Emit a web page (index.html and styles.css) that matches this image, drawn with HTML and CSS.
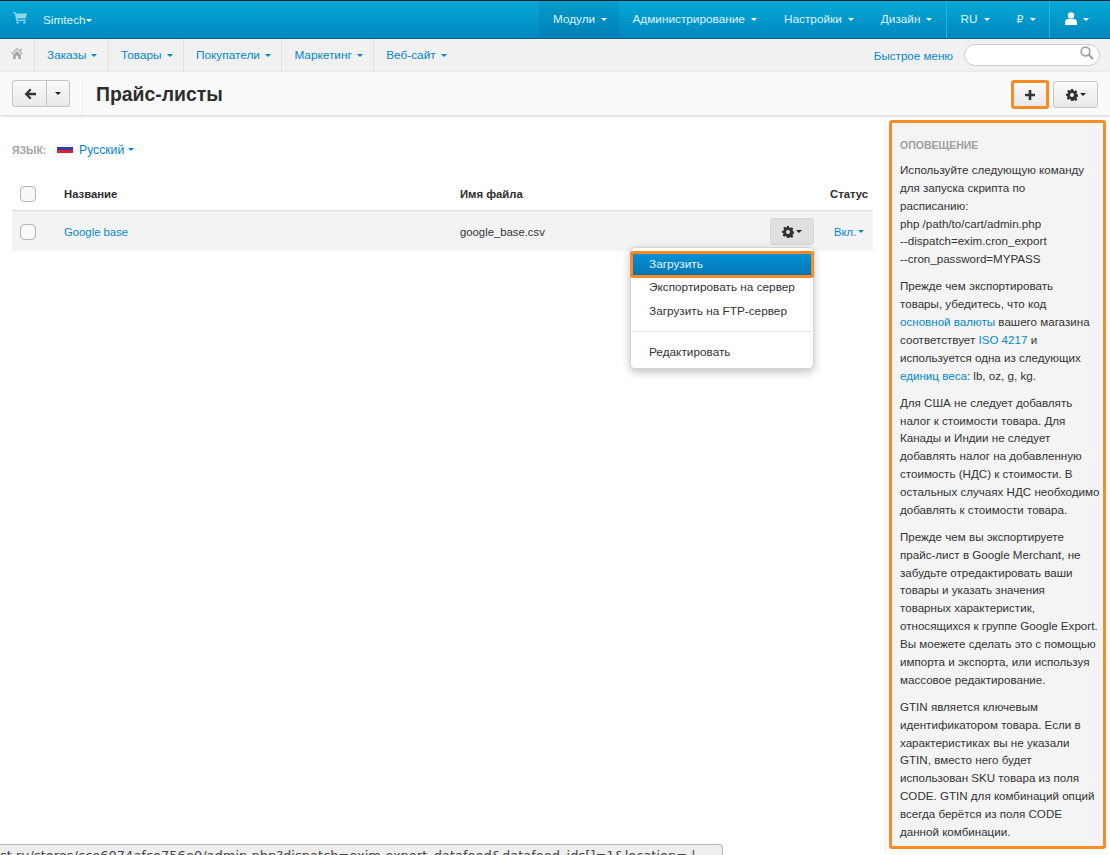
FILE: index.html
```html
<!DOCTYPE html>
<html lang="ru">
  <head>
    <meta charset="UTF-8" />
    <title>Прайс-листы</title>
    <link rel="stylesheet" href="styles.css">
  </head>
  <body>
    <header class="topbar">
      <div class="brand">
        <svg class="cart" width="14" height="12" viewBox="0 0 14 12"><path d="M0 0h2.6l.4 1.5H14l-1.2 5H4.2l.3 1.2h8.3v1.2H3.4L1.7 1.2H0z" /><circle cx="4.6" cy="10.6" r="1.2" /><circle cx="11.4" cy="10.6" r="1.2" /></svg>
        <a class="shop" href="#">Simtech<i class="caret"></i></a>
      </div>
      <nav class="topnav">
        <a class="active mod" href="#">Модули<i class="caret"></i></a>
        <a href="#">Администрирование<i class="caret"></i></a>
        <a href="#">Настройки<i class="caret"></i></a>
        <a href="#">Дизайн<i class="caret"></i></a>
        <a class="sep" href="#">RU<i class="caret"></i></a>
        <a href="#"><span class="rub">₽</span><i class="caret"></i></a>
        <a class="sep user" href="#">
          <svg width="12" height="13" viewBox="0 0 12 13" fill="#fff"><circle cx="6" cy="3.4" r="3.2" /><path d="M0 13v-3c0-2 1.6-3 3.2-3h5.6C10.400 7 12 8 12 10v3z" /></svg><i class="caret"></i>
        </a>
      </nav>
    </header>

    <div class="subbar">
      <a class="home" href="#">
        <svg width="12" height="11" viewBox="0 0 12 11" fill="#a9a9a9"><path d="M6 0l6 5.400-.7.8L6 1.600.7 6.200 0 5.400zM2 6.400l4-3.400 4 3.400V11H7.200V7.800H4.800V11H2zM9 .8h1.500v2.500L9 2z" /></svg>
      </a>
      <a class="subitem" href="#">Заказы<i class="caret"></i></a>
      <a class="subitem" href="#">Товары<i class="caret"></i></a>
      <a class="subitem" href="#">Покупатели<i class="caret"></i></a>
      <a class="subitem" href="#">Маркетинг<i class="caret"></i></a>
      <a class="subitem last" href="#">Веб-сайт<i class="caret"></i></a>
      <a class="quick" href="#">Быстрое меню</a>
      <div class="search">
        <svg width="14" height="14" viewBox="0 0 14 14" fill="none" stroke="#a4a4a4"><circle cx="5.500" cy="5.500" r="4.300" stroke-width="1.800" /><path d="M8.700 8.700l4.300 4.300" stroke-width="2.400" /></svg>
      </div>
    </div>

    <div class="titlebar">
      <div class="btn-group">
        <a class="btn back" href="#">
          <svg width="12" height="12" viewBox="0 0 12 12" fill="#333"><path d="M6 .6l1.500 1.500-2.600 2.600H12v2.600H4.900l2.600 2.600L6 11.400.6 6z" /></svg>
        </a>
        <a class="btn more" href="#"><i class="caret dark"></i></a>
      </div>
      <h1>Прайс-листы</h1>
      <a class="btn add" href="#">
        <svg width="10" height="10" viewBox="0 0 10 10" fill="#333"><path d="M3.700 0h2.600v3.700H10v2.600H6.300V10H3.700V6.300H0V3.700h3.700z" /></svg>
      </a>
      <a class="btn tools" href="#">
        <svg class="gear" width="12" height="12" viewBox="0 0 12 12"><use href="#gear" /></svg>
        <i class="caret dark"></i>
      </a>
    </div>

    <div class="layout">
      <main class="content">
        <div class="lang">
          <span class="lang-label">ЯЗЫК:</span>
          <span class="flag"></span>
          <a href="#">Русский<i class="caret blue"></i></a>
        </div>

        <table class="feeds">
          <thead>
            <tr>
              <th class="c-check"><span class="checkbox"></span></th>
              <th class="c-name">Название</th>
              <th class="c-file">Имя файла</th>
              <th class="c-tools"></th>
              <th class="c-status">Статус</th>
            </tr>
          </thead>
          <tbody>
            <tr>
              <td class="c-check"><span class="checkbox"></span></td>
              <td class="c-name"><a href="#">Google base</a></td>
              <td class="c-file">google_base.csv</td>
              <td class="c-tools">
                <a class="btn row-tools" href="#">
                  <svg class="gear" width="12" height="12" viewBox="0 0 12 12"><use href="#gear" /></svg>
                  <i class="caret dark"></i>
                </a>
              </td>
              <td class="c-status"><a href="#">Вкл.<i class="caret blue"></i></a></td>
            </tr>
          </tbody>
        </table>

        <ul class="dropdown">
          <li class="current"><a href="#">Загрузить</a></li>
          <li><a href="#">Экспортировать на сервер</a></li>
          <li><a href="#">Загрузить на FTP-сервер</a></li>
          <li class="divider"></li>
          <li><a href="#">Редактировать</a></li>
        </ul>
      </main>

      <aside class="sidebar">
        <div class="notice">
          <h4>Оповещение</h4>
          <p>Используйте следующую команду<br />для запуска скрипта по<br />расписанию:<br />php /path/to/cart/admin.php<br />--dispatch=exim.cron_export<br />--cron_password=MYPASS</p>
          <p>Прежде чем экспортировать<br />товары, убедитесь, что код<br /><a href="#">основной валюты</a> вашего магазина<br />соответствует <a href="#">ISO 4217</a> и<br />используется одна из следующих<br /><a href="#">единиц веса</a>: lb, oz, g, kg.</p>
          <p>Для США не следует добавлять<br />налог к стоимости товара. Для<br />Канады и Индии не следует<br />добавлять налог на добавленную<br />стоимость (НДС) к стоимости. В<br />остальных случаях НДС необходимо<br />добавлять к стоимости товара.</p>
          <p>Прежде чем вы экспортируете<br />прайс-лист в Google Merchant, не<br />забудьте отредактировать ваши<br />товары и указать значения<br />товарных характеристик,<br />относящихся к группе Google Export.<br />Вы моежете сделать это с помощью<br />импорта и экспорта, или используя<br />массовое редактирование.</p>
          <p>GTIN является ключевым<br />идентификатором товара. Если в<br />характеристиках вы не указали<br />GTIN, вместо него будет<br />использован SKU товара из поля<br />CODE. GTIN для комбинаций опций<br />всегда берётся из поля CODE<br />данной комбинации.</p>
        </div>
      </aside>
    </div>

    <div class="status-url">st.ru/stores/cce6074afce756e0/admin.php?dispatch=exim.export_datafeed&amp;datafeed_ids[]=1&amp;location= |</div>

    <svg class="defs" width="0" height="0">
      <symbol id="gear" viewBox="0 0 12 12">
        <path fill="#333" fill-rule="evenodd" d="M4.900 0h2.200l.3 1.600 1.100.5L9.900 1.200l1.500 1.500-.9 1.400.5 1.100 1.600.3v2.200l-1.600.3-.5 1.100.9 1.400-1.500 1.500-1.400-.9-1.100.5L7.100 12H4.900l-.3-1.600-1.100-.5-1.400.9-1.500-1.500.9-1.400-.5-1.100L0 7.100V4.900l1.600-.3.500-1.100-.9-1.400L2.700.7l1.400.9 1.100-.5zM6 4a2 2 0 1 0 0 4 2 2 0 0 0 0-4z" />
      </symbol>
    </svg>
  </body>
</html>
```

FILE: styles.css
```css
* {
  box-sizing: border-box;
}
html,
body {
  height: 100%;
}
body {
  margin: 0;
  position: relative;
  overflow: hidden;
  font-family: "Liberation Sans", Arial, sans-serif;
  font-size: 11.3px;
  color: #333;
  background-color: #fff;
}
a {
  color: #0388cc;
  text-decoration: none;
}
.caret {
  display: inline-block;
  margin-left: 6px;
  vertical-align: 2px;
  border-top: 3px solid #fff;
  border-left: 3px solid transparent;
  border-right: 3px solid transparent;
}
.caret.dark {
  border-top-color: #222;
}
.caret.blue {
  border-top-color: #0388cc;
  margin-left: 4px;
  vertical-align: 3px;
}

/* top bar */
.topbar {
  display: flex;
  justify-content: space-between;
  height: 39px;
  border-top: 1px solid #10222e;
  border-bottom: 1px solid #04628f;
  background: linear-gradient(to bottom, #04a9d6, #0187bf);
}
.brand {
  display: flex;
  padding-left: 13px;
}
.cart {
  margin-top: 11px;
  fill: #8fd6ec;
}
.shop {
  margin: 12px 0 0 16px;
  color: #dff3fb;
  font-size: 11.8px;
}
.shop .caret {
  margin-left: 0;
}
.topnav {
  display: flex;
}
.topnav a {
  padding: 11px 13.5px 0;
  color: #dff3fb;
  font-size: 11.8px;
}
.topnav .mod {
  width: 80px;
  padding-left: 14px;
  padding-right: 0;
  background-color: rgba(0, 60, 110, 0.1);
}
.topnav .sep {
  border-left: 1px solid #35acd5;
}
.topnav .user {
  padding-left: 15px;
  padding-right: 21px;
}
.topnav .sep svg {
  vertical-align: -2px;
}
.rub {
  font-family: "DejaVu Sans", sans-serif;
  font-size: 11px;
}

/* second bar */
.subbar {
  display: flex;
  height: 33px;
  background-color: #f1f1f1;
}
.home {
  width: 35px;
  padding: 9px 0 0 11px;
  border-right: 1px solid #e2e2e2;
}
.subitem {
  padding: 9px 10.500px 0 12px;
  border-right: 1px solid #e2e2e2;
  font-size: 11.8px;
}
.subitem.last {
  border-right: 0;
}
.subitem .caret {
  border-top-color: #0388cc;
  margin-left: 5px;
}
.quick {
  margin-left: auto;
  padding-top: 10px;
  font-size: 11.6px;
}
.search {
  width: 136px;
  height: 22px;
  margin: 5px 10px 0 11px;
  padding: 1px 0 0 115px;
  border: 1px solid #ccc;
  border-radius: 11px;
  background-color: #fff;
}
.search svg {
  display: block;
}

/* title bar */
.titlebar {
  display: flex;
  align-items: flex-start;
  height: 43px;
  padding: 8px 12px 0;
  background-color: #fafafa;
  box-shadow: 0 1px 3px rgba(0, 0, 0, 0.2);
  position: relative;
}
.btn {
  display: flex;
  align-items: center;
  justify-content: center;
  height: 27px;
  border: 1px solid #c5c5c5;
  border-radius: 3px;
  background: linear-gradient(to bottom, #fbfbfb, #e9e9e9);
}
.btn-group {
  display: flex;
  padding-right: 12px;
  border-right: 1px solid #eee;
  height: 35px;
}
.back {
  width: 35px;
  border-radius: 3px 0 0 3px;
}
.more {
  width: 23px;
  border-left: 0;
  border-radius: 0 3px 3px 0;
}
.more .caret {
  margin-left: 0;
}
h1 {
  margin: 2px 0 0 13px;
  font-size: 19.4px;
  line-height: 24px;
  color: #2e2e2e;
}
.add {
  width: 38px;
  height: 29px;
  margin-left: auto;
  border: 3px solid #fd8a25;
}
.tools {
  width: 45px;
  margin: 1px 0 0 4px;
  height: 27px;
}
.gear {
  display: block;
}
.tools .caret,
.row-tools .caret {
  margin-left: 2px;
  vertical-align: 0;
}

/* main area */
.layout {
  display: flex;
  height: 740px;
}
.content {
  position: relative;
  flex: 1;
  padding: 28px 12px 0;
  border-right: 1px solid #efefef;
}
.lang {
  display: flex;
  align-items: center;
  height: 14px;
  font-size: 12.2px;
}
.lang-label {
  width: 45px;
  font-size: 10.500px;
  font-weight: bold;
  color: #a3a3a3;
}
.flag {
  width: 16px;
  height: 9px;
  margin-right: 6px;
  margin-top: -3px;
  background: linear-gradient(to bottom, #f4f4f8 33%, #2a3fa8 33%, #2a3fa8 66%, #d8222e 66%);
}
.feeds {
  width: 861px;
  margin-top: 19px;
  border-collapse: collapse;
}
.feeds th {
  height: 34px;
  padding: 2px 0 0;
  text-align: left;
  border-bottom: 1px solid #ddd;
  color: #2e2e2e;
}
.feeds td {
  height: 41px;
  padding: 2px 0 0;
  background-color: #f3f3f3;
}
.c-check {
  width: 52px;
  padding-left: 8px !important;
}
.c-name {
  width: 396px;
}
.c-file {
  width: 300px;
}
.c-tools {
  width: 65px;
}
.feeds td.c-tools {
  padding-left: 10px;
}
.feeds td.c-status {
  padding-left: 9px;
}
.feeds td.c-status .caret {
  margin-left: 2px;
}
.feeds th.c-status {
  padding-left: 5px;
}
.checkbox {
  display: block;
  width: 16px;
  height: 16px;
  border: 1px solid #b5b5b5;
  border-radius: 4px;
  background-color: #f8f8f8;
}
.row-tools {
  width: 44px;
  height: 27px;
  border-color: #d8d8d8;
  background: #e0e0e0;
}

/* action menu */
.dropdown {
  position: absolute;
  top: 132px;
  left: 630px;
  width: 184px;
  margin: 0;
  padding: 3px 0 1px;
  list-style: none;
  border: 1px solid #d5d5d5;
  border-radius: 5px;
  background-color: #fff;
  box-shadow: 0 3px 8px rgba(0, 0, 0, 0.25);
}
.dropdown a {
  display: block;
  height: 23.500px;
  padding: 2px 0 0 18px;
  font-size: 11.800px;
  color: #333;
}
.dropdown .current {
  margin: 0 -1px;
  height: 27px;
  border: 3px solid #fd8a25;
  border-radius: 2px;
}
.dropdown .current a {
  height: 21px;
  padding: 3px 0 0 16px;
  color: #e6f3fa;
  background: linear-gradient(to bottom, #0392d3, #0276b6);
}
.divider {
  height: 1px;
  margin: 6px 1px 11px;
  background-color: #e5e5e5;
}

/* side panel */
.sidebar {
  width: 224px;
  padding: 5px 4px 0 3px;
}
.notice {
  height: 729px;
  padding: 14px 3px 0 8px;
  border: 3px solid #fd8a25;
  border-radius: 3px;
  background-color: #f4f4f4;
  font-size: 11.600px;
  line-height: 17.850px;
  color: #333;
  white-space: nowrap;
}
.notice h4 {
  margin: 0 0 8px;
  font-size: 10.500px;
  line-height: 16px;
  color: #a0a0a0;
  text-transform: uppercase;
}
.notice p {
  margin: 0 0 9.300px;
}

/* link hover bubble from the browser */
.status-url {
  position: absolute;
  left: 0;
  bottom: 0;
  width: 723px;
  height: 11px;
  overflow: hidden;
  padding-top: 3px;
  border: 1px solid #b5b5b5;
  border-bottom: 0;
  border-left: 0;
  border-radius: 0 4px 0 0;
  background-color: #eeeeee;
  font-family: "DejaVu Sans", sans-serif;
  font-size: 13px;
  line-height: 16px;
  white-space: nowrap;
  color: #444;
}
.defs {
  position: absolute;
}
```
